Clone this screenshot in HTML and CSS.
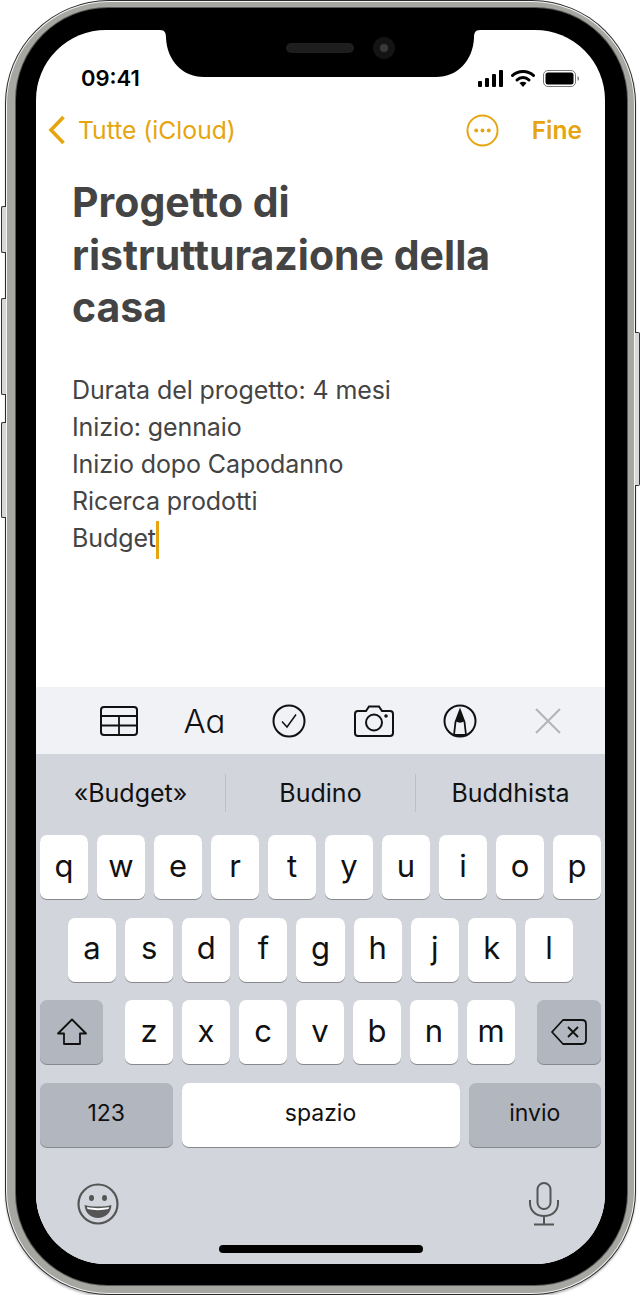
FILE: index.html
```html
<!DOCTYPE html>
<html lang="it">
<head>
    <meta charset="UTF-8">
    <meta name="viewport" content="width=device-width, initial-scale=1.0">
    <title>Note</title>
    <link rel="stylesheet" href="styles.css">
</head>
<body>
<div class="phone">
    <span class="side side-mute"></span>
    <span class="side side-up"></span>
    <span class="side side-down"></span>
    <span class="side side-power"></span>
    <div class="band-light">
        <div class="band-metal">
            <div class="bezel">
                <div class="screen">
                    <!-- notch sits over the status bar -->
                    <div class="notch">
                        <svg width="320" height="48" viewBox="0 0 320 48">
                            <path d="M0 0 H320 C315 0 314 3 314 8 C313 30 298 47 276 47 H44 C22 47 7 30 6 8 C6 3 5 0 0 0 Z" fill="#000"/>
                            <rect x="126" y="13" width="68" height="10" rx="5" fill="#1e1e1e"/>
                            <circle cx="224" cy="18" r="11" fill="#141414"/>
                            <circle cx="224" cy="18" r="4" fill="#3a3a3a"/>
                        </svg>
                    </div>

                    <div class="status">
                        <span class="time">09:41</span>
                        <div class="status-icons">
                            <svg width="25" height="17" viewBox="0 0 25 17">
                                <rect x="0" y="11" width="4" height="6" rx="1"/>
                                <rect x="7" y="8" width="4" height="9" rx="1"/>
                                <rect x="14" y="4" width="4" height="13" rx="1"/>
                                <rect x="21" y="0" width="4" height="17" rx="1"/>
                            </svg>
                            <svg width="24" height="18" viewBox="0 0 24 18">
                                <path d="M1.5 6.5 C7 1 17 1 22.5 6.5" fill="none" stroke="#000" stroke-width="3" stroke-linecap="round"/>
                                <path d="M6 11 C9.500 7.500 14.500 7.500 18 11" fill="none" stroke="#000" stroke-width="3" stroke-linecap="round"/>
                                <path d="M12 18 L8.500 14 C10.500 12.300 13.500 12.300 15.500 14 Z"/>
                            </svg>
                            <svg width="36" height="17" viewBox="0 0 36 17">
                                <rect x="0.500" y="0.500" width="32" height="16" rx="4.500" fill="none" stroke="#777"/>
                                <rect x="2.500" y="2.500" width="28" height="12" rx="2.500"/>
                                <path d="M34.500 6 C35.500 6.500 36 7.500 36 8.500 C36 9.500 35.500 10.500 34.500 11 Z" fill="#777"/>
                            </svg>
                        </div>
                    </div>

                    <div class="nav">
                        <div class="nav-back">
                            <svg width="18" height="30" viewBox="0 0 18 30">
                                <path d="M15.500 2 L3 15 L15.500 28" fill="none" stroke="#e6a50e" stroke-width="3.600"/>
                            </svg>
                            <span>Tutte (iCloud)</span>
                        </div>
                        <div class="nav-right">
                            <svg width="33" height="33" viewBox="0 0 34 34">
                                <circle cx="17" cy="17" r="15.500" fill="none" stroke="#e6a50e" stroke-width="2"/>
                                <circle cx="10.500" cy="17" r="2" fill="#e6a50e"/>
                                <circle cx="17" cy="17" r="2" fill="#e6a50e"/>
                                <circle cx="23.500" cy="17" r="2" fill="#e6a50e"/>
                            </svg>
                            <span class="nav-done">Fine</span>
                        </div>
                    </div>

                    <div class="note">
                        <h1>Progetto di ristrutturazione della casa</h1>
                        <p>Durata del progetto: 4 mesi</p>
                        <p>Inizio: gennaio</p>
                        <p>Inizio dopo Capodanno</p>
                        <p>Ricerca prodotti</p>
                        <p>Budget<span class="cursor"></span></p>
                    </div>

                    <div class="toolbar">
                        <svg width="38" height="30" viewBox="0 0 38 30">
                            <rect x="1" y="1" width="36" height="28" rx="3" fill="none" stroke="#111" stroke-width="2"/>
                            <path d="M1 10 H37 M1 19.500 H37 M19 10 V29" fill="none" stroke="#111" stroke-width="1.800"/>
                        </svg>
                        <span class="tool-text">Aa</span>
                        <svg width="34" height="34" viewBox="0 0 34 34">
                            <circle cx="17" cy="17" r="15.500" fill="none" stroke="#111" stroke-width="2"/>
                            <path d="M10 17.500 L15 23 L24 10.500" fill="none" stroke="#111" stroke-width="1.500"/>
                        </svg>
                        <svg width="40" height="32" viewBox="0 0 40 32">
                            <path d="M4 6 H12 L15 1.500 H25 L28 6 H36 C38 6 39 7 39 9 V28 C39 30 38 31 36 31 H4 C2 31 1 30 1 28 V9 C1 7 2 6 4 6 Z" fill="none" stroke="#111" stroke-width="2"/>
                            <circle cx="20" cy="17.500" r="8" fill="none" stroke="#111" stroke-width="2"/>
                            <circle cx="32" cy="11" r="1.800" fill="#111"/>
                        </svg>
                        <svg width="34" height="34" viewBox="0 0 34 34">
                            <circle cx="17" cy="17" r="15.500" fill="none" stroke="#111" stroke-width="2"/>
                            <path d="M17 6 L21.500 18 L23 31 H11 L12.500 18 Z" fill="none" stroke="#111" stroke-width="1.800"/>
                            <path d="M17 6 L21 17.500 C18.500 19 15.500 19 13 17.500 Z" fill="#111"/>
                        </svg>
                        <svg width="26" height="26" viewBox="0 0 26 26">
                            <path d="M1 1 L25 25 M25 1 L1 25" fill="none" stroke="#b2b4b8" stroke-width="2"/>
                        </svg>
                    </div>

                    <div class="keyboard">
                        <div class="suggestions">
                            <span>«Budget»</span>
                            <span>Budino</span>
                            <span>Buddhista</span>
                        </div>
                        <div class="row">
                            <div class="key">q</div><div class="key">w</div><div class="key">e</div><div class="key">r</div><div class="key">t</div><div class="key">y</div><div class="key">u</div><div class="key">i</div><div class="key">o</div><div class="key">p</div>
                        </div>
                        <div class="row row-middle">
                            <div class="key">a</div><div class="key">s</div><div class="key">d</div><div class="key">f</div><div class="key">g</div><div class="key">h</div><div class="key">j</div><div class="key">k</div><div class="key">l</div>
                        </div>
                        <div class="row">
                            <div class="key key-dark key-shift">
                                <svg width="32" height="28" viewBox="0 0 32 28">
                                    <path d="M16 1.500 L30 15.500 H24 V26 H8 V15.500 H2 Z" fill="none" stroke="#111" stroke-width="1.800" stroke-linejoin="round"/>
                                </svg>
                            </div>
                            <div class="letters">
                                <div class="key">z</div><div class="key">x</div><div class="key">c</div><div class="key">v</div><div class="key">b</div><div class="key">n</div><div class="key">m</div>
                            </div>
                            <div class="key key-dark key-delete">
                                <svg width="36" height="26" viewBox="0 0 36 26">
                                    <path d="M12 1 H31 C33.500 1 35 2.500 35 5 V21 C35 23.500 33.500 25 31 25 H12 L1 13 Z" fill="none" stroke="#111" stroke-width="1.800" stroke-linejoin="round"/>
                                    <path d="M17 8 L27 18 M27 8 L17 18" fill="none" stroke="#111" stroke-width="1.800"/>
                                </svg>
                            </div>
                        </div>
                        <div class="row">
                            <div class="key key-dark key-word key-side">123</div>
                            <div class="key key-word key-space">spazio</div>
                            <div class="key key-dark key-word key-side">invio</div>
                        </div>
                        <div class="kb-bottom">
                            <svg width="42" height="42" viewBox="0 0 42 42">
                                <circle cx="21" cy="21" r="19.500" fill="none" stroke="#555" stroke-width="2.200"/>
                                <ellipse cx="14.500" cy="15" rx="2.500" ry="3" fill="#555"/>
                                <ellipse cx="27.500" cy="15" rx="2.500" ry="3" fill="#555"/>
                                <path d="M7.500 22 C15 24 27 24 34.500 22 C34 30 28 35 21 35 C14 35 8 30 7.500 22 Z" fill="#555"/>
                                <path d="M10 24 C16 25.500 26 25.500 32 24 L31.500 26 C25 27.500 17 27.500 10.500 26 Z" fill="#fff"/>
                            </svg>
                            <svg width="32" height="44" viewBox="0 0 32 44">
                                <rect x="9.500" y="1" width="13" height="26" rx="6.500" fill="none" stroke="#555" stroke-width="2"/>
                                <path d="M2 18 V21 C2 29 8 34 16 34 C24 34 30 29 30 21 V18 M16 34 V42 M6 42.500 H26" fill="none" stroke="#555" stroke-width="2"/>
                            </svg>
                        </div>
                        <div class="home-bar"></div>
                    </div>
                </div>
            </div>
        </div>
    </div>
</div>
</body>
</html>
```

FILE: styles.css
```css
* {
    box-sizing: border-box;
}
body {
    margin: 0;
    background-color: #fff;
    font-family: Inter, "Liberation Sans", sans-serif;
    color: #111;
}

/* device frame */
.phone {
    position: relative;
    width: 631px;
    height: 1295px;
    margin-left: 5px;
    padding: 1px;
    border-radius: 104px;
    background-color: #2b2b2b;
    box-shadow: 0 2px 2px #c4c4c4;
}
.band-light {
    height: 100%;
    padding: 1px;
    border-radius: 103px;
    background-color: #f4f4f4;
}
.band-metal {
    height: 100%;
    padding: 6px 7px 8px 9px;
    border-radius: 102px;
    background-color: #a7a7a1;
}
.bezel {
    height: 100%;
    padding: 22px 22px 21px 20px;
    border-radius: 92px;
    background-color: #000;
    box-shadow: 0 0 0 1px #5a5a5a;
}
.side {
    position: absolute;
    left: -4px;
    width: 5px;
    border: 1px solid #333;
    border-right: 0;
    border-radius: 2px 0 0 2px;
    background-color: #d8d8d8;
}
.side-mute { top: 206px; height: 47px; }
.side-up { top: 298px; height: 97px; }
.side-down { top: 422px; height: 96px; }
.side-power {
    top: 332px;
    left: auto;
    right: -4px;
    height: 154px;
    border: 1px solid #333;
    border-left: 0;
    border-radius: 0 2px 2px 0;
}

.screen {
    position: relative;
    display: flex;
    flex-direction: column;
    height: 100%;
    overflow: hidden;
    border-radius: 70px;
    background-color: #fff;
}
.notch {
    position: absolute;
    top: 0;
    left: 124px;
    line-height: 0;
}

/* status bar */
.status {
    display: flex;
    justify-content: space-between;
    align-items: center;
    height: 72px;
    padding: 24px 26px 0 45px;
}
.time {
    font-size: 22px;
    font-weight: 600;
    color: #000;
}
.status-icons {
    display: flex;
    align-items: center;
    gap: 8px;
}

/* nav bar */
.nav {
    display: flex;
    justify-content: space-between;
    align-items: center;
    height: 56px;
    padding: 0 23px 0 12px;
    font-size: 24.700px;
    color: #e6a50e;
}
.nav-back {
    display: flex;
    align-items: center;
    gap: 12px;
}
.nav-right {
    display: flex;
    align-items: center;
    gap: 33px;
}
.nav-done {
    font-size: 24.500px;
    font-weight: 600;
}

/* note */
.note {
    flex: 1;
    padding: 18px 36px 0;
    color: #444;
}
.note h1 {
    max-width: 440px;
    margin: 0 0 38px;
    font-size: 41px;
    line-height: 52.5px;
    font-weight: 700;
}
.note p {
    margin: 0;
    font-size: 25px;
    line-height: 37px;
    letter-spacing: -0.1px;
}
.cursor {
    display: inline-block;
    width: 3px;
    height: 38px;
    margin: -2px 0 -2px 0;
    vertical-align: middle;
    background-color: #e6a50e;
}

/* formatting toolbar */
.toolbar {
    display: grid;
    grid-template-columns: 87px 85px 84px 85px 87px 90px;
    justify-items: center;
    align-items: center;
    height: 67px;
    padding-left: 39px;
    background-color: #f1f2f6;
}
.tool-text {
    font-size: 33px;
    font-weight: 300;
    font-feature-settings: "cv11";
}

/* keyboard */
.keyboard {
    display: flex;
    flex-direction: column;
    height: 510px;
    background-color: #d2d5dc;
}
.suggestions {
    display: grid;
    grid-template-columns: 189px 190px 190px;
    height: 81px;
    padding-top: 20px;
}
.suggestions span {
    display: flex;
    justify-content: center;
    align-items: center;
    height: 38px;
    font-size: 25px;
    border-left: 1px solid #bcc0c7;
}
.suggestions span:first-child {
    border-left: 0;
}
.row {
    display: flex;
    gap: 9px;
    height: 64px;
    margin-bottom: 18.500px;
    padding: 0 4px;
}
.row-middle {
    padding: 0 32px;
}
.letters {
    display: flex;
    flex: 1;
    gap: 9px;
    margin: 0 13px;
}
.key {
    display: flex;
    flex: 1;
    justify-content: center;
    align-items: center;
    padding-bottom: 4px;
    border-radius: 7px;
    background-color: #fff;
    box-shadow: 0 1px 0 #88898c;
    font-size: 31px;
}
.key-dark {
    background-color: #b2b6bf;
}
.key-shift {
    flex: 0 0 63px;
    padding-bottom: 0;
}
.key-delete {
    flex: 0 0 64px;
    padding-bottom: 0;
}
.key-word {
    font-size: 23px;
}
.key-side {
    flex: 0 0 132.500px;
}
.kb-bottom {
    display: flex;
    justify-content: space-between;
    align-items: center;
    margin-top: 17px;
    padding: 0 45px 0 41px;
}
.home-bar {
    width: 204px;
    height: 8px;
    margin: 19px auto 0;
    border-radius: 4px;
    background-color: #000;
}
```
